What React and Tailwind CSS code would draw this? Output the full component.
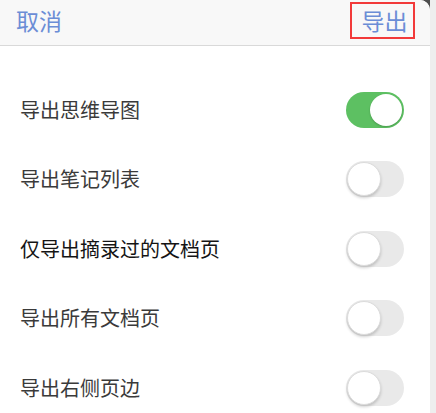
import React from "react";

const options = [
  { label: "导出思维导图", on: true, strong: false },
  { label: "导出笔记列表", on: false, strong: false },
  { label: "仅导出摘录过的文档页", on: false, strong: true },
  { label: "导出所有文档页", on: false, strong: false },
  { label: "导出右侧页边", on: false, strong: false },
];

function Toggle({ on }) {
  if (on) {
    return (
      <div className="relative w-[58px] h-[36px] rounded-full bg-[#5dc062]">
        <div className="absolute right-[2px] top-[2px] w-[32px] h-[32px] rounded-full bg-white shadow-[0_1px_2px_rgba(0,0,0,0.2)]" />
      </div>
    );
  }
  return (
    <div className="relative w-[58px] h-[36px] rounded-full bg-[#e9e9e9]">
      <div className="absolute left-[1px] top-[1px] w-[34px] h-[34px] rounded-full bg-white border border-[#dcdcdc] shadow-[0_2px_3px_rgba(0,0,0,0.18)]" />
    </div>
  );
}

export default function App() {
  return (
    <div
      className="flex w-[436px] h-[413px] bg-[#eeeeee] overflow-hidden"
      style={{ fontFamily: '"Noto Sans CJK SC", "Noto Sans", sans-serif' }}
    >
      <div className="w-[430px] h-full bg-[#4e4e4e]">
        <div className="h-full bg-white rounded-tr-[10px] overflow-hidden flex flex-col">
          <div className="h-[46px] shrink-0 bg-[#f8f8f8] border-b border-[#d9d9d9] flex items-start justify-between pl-[16px] pr-[15px] pt-[2px]">
            <span className="h-[37px] flex items-center text-[23px] leading-none text-[#6b8dd6]">
              取消
            </span>
            <span className="h-[37px] w-[65px] border-2 border-[#f23a3a] flex items-center justify-center pl-[4px] text-[23px] leading-none text-[#6b8dd6]">
              导出
            </span>
          </div>
          <div className="pt-[29px] flex flex-col">
            {options.map((o) => (
              <div
                key={o.label}
                className="h-[69.5px] flex items-center justify-between pl-[20px] pr-[26px]"
              >
                <span
                  className={
                    o.strong
                      ? "text-[20px] leading-none text-[#141414]"
                      : "text-[20px] leading-none text-[#3a3a3a]"
                  }
                >
                  {o.label}
                </span>
                <Toggle on={o.on} />
              </div>
            ))}
          </div>
        </div>
      </div>
    </div>
  );
}
